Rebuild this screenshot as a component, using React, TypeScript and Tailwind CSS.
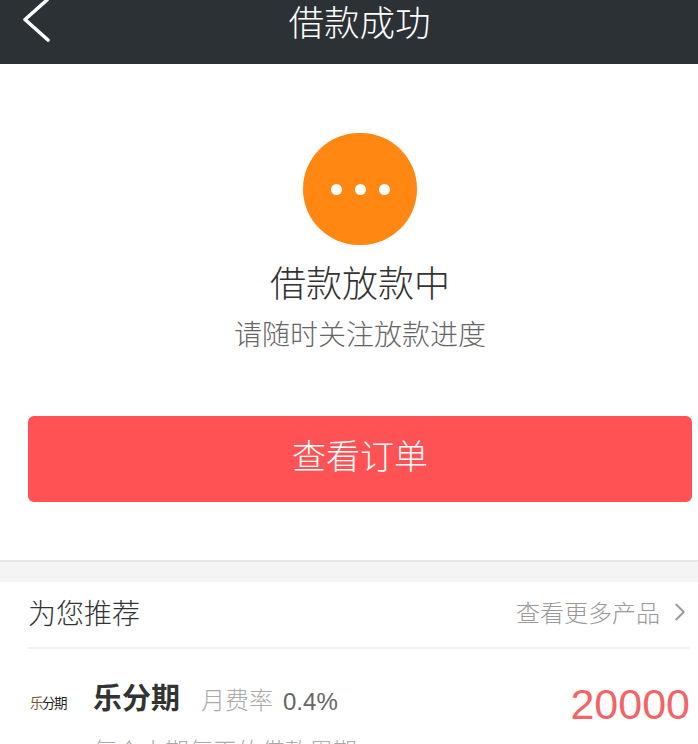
import { ChevronRight } from 'lucide-react';

const cjk = 'font-["Noto_Sans_CJK_SC","Noto_Sans",sans-serif]';
const latin = 'font-["Liberation_Sans","Noto_Sans_CJK_SC",sans-serif]';

export default function App() {
  return (
    <div className={`h-[744px] w-[698px] overflow-hidden bg-white font-light ${cjk}`}>
      {/* Header */}
      <div className="relative flex h-16 items-start justify-center bg-[#2c3135] pl-[21px]">
        <svg className="absolute left-[16px] top-0" width="40" height="44" viewBox="0 0 40 44" fill="none">
          <path d="M31 0 L9 19.5 L32 40" stroke="white" strokeWidth="3.6" strokeLinecap="round" strokeLinejoin="round" />
        </svg>
        <div className="text-[35.5px] leading-[42px] text-white">借款成功</div>
      </div>

      {/* Status */}
      <div className="flex flex-col items-center pl-[22px] pt-[69px]">
        <div className="flex h-[112px] w-[114px] items-center justify-center gap-[13px] rounded-full bg-[#ff8712]">
          <span className="h-[11px] w-[11px] rounded-full bg-white" />
          <span className="h-[11px] w-[11px] rounded-full bg-white" />
          <span className="h-[11px] w-[11px] rounded-full bg-white" />
        </div>
        <div className="mt-[12px] text-[36px] leading-[48px] text-[#333]">借款放款中</div>
        <div className="mt-[8px] text-[28px] leading-[40px] text-[#666]">请随时关注放款进度</div>
      </div>

      {/* Button */}
      <div className="mt-[63px] pl-[28px] pr-[6px]">
        <div className="flex h-[86px] items-center justify-center rounded-[6px] bg-[#ff5254] pb-[10px] text-[34px] text-white">查看订单</div>
      </div>

      <div className="mt-[58px] h-[22px] border-t-2 border-[#e6e6e6] bg-[#f4f4f4]" />

      {/* Recommend */}
      <div className="pl-[28px] pr-[8px]">
        <div className="flex h-[67px] items-center justify-between border-b-2 border-[#f2f2f2] pb-[6px]">
          <span className="text-[28px] text-[#333]">为您推荐</span>
          <span className="flex items-center text-[24px] text-[#999]">
            查看更多产品
            <ChevronRight className="ml-[5px] mr-[-5px] h-[30px] w-[30px]" strokeWidth={1.5} />
          </span>
        </div>
        <div className="flex items-start justify-between pt-[23px]">
          <div>
            <div className="flex items-center">
              <div className="mt-[12px] w-[37px] whitespace-nowrap pl-[2px] text-[13.5px] font-normal leading-[18px] tracking-[-1.5px] text-[#222]">
                <span className="text-[#7a5a30]">乐</span>分期
              </div>
              <span className="ml-[28px] text-[29px] font-bold leading-[44px] text-[#333]">乐分期</span>
              <span className="ml-[21px] mt-[6px] text-[24px] text-[#aaa]">月费率</span>
              <span className={`ml-[10px] mt-[12px] text-[24px] text-[#666] ${latin}`}>0.4%</span>
            </div>
            <div className="mt-[13px] pl-[65px] text-[24px] leading-[34px] text-[#aaa]">每个小期每天的借款周期</div>
          </div>
          <div className="flex flex-col items-end">
            <span className={`mt-[7px] text-[43px] leading-[50px] text-[#f26466] ${latin}`}>20000</span>
            <span className="mt-[9px] text-[24px] leading-[34px] text-[#aaa]">最高额度</span>
          </div>
        </div>
      </div>
    </div>
  );
}
